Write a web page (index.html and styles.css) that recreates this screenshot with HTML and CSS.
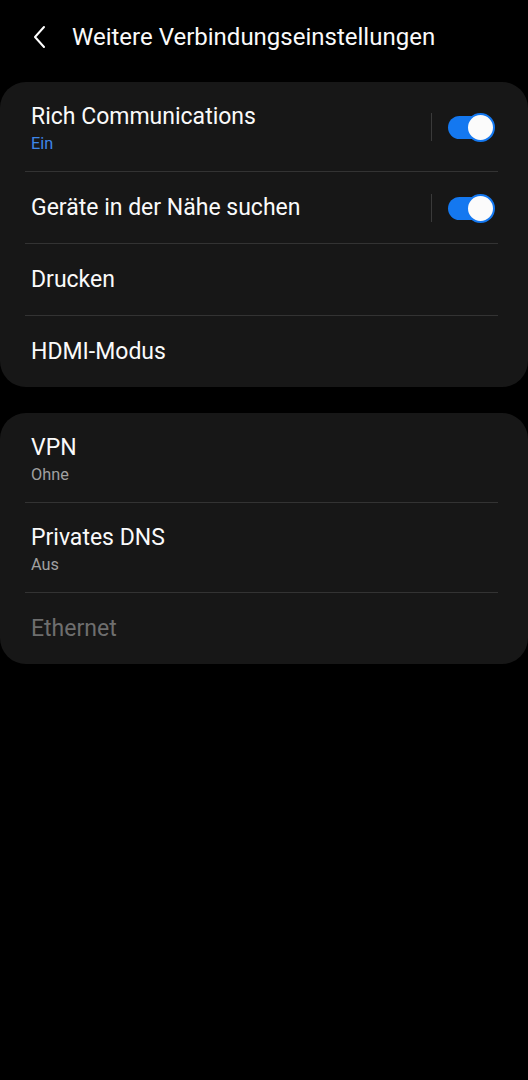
FILE: index.html
```html
<!DOCTYPE html>
<html lang="de">
<head>
    <meta charset="UTF-8">
    <title>Weitere Verbindungseinstellungen</title>
    <link rel="stylesheet" href="styles.css">
</head>
<body>
    <header class="topbar">
        <svg class="back" width="16" height="24" viewBox="0 0 16 24">
            <path d="M12 2 L3 12 L12 22" fill="none" stroke="#fff" stroke-width="2" stroke-linecap="round" stroke-linejoin="round"/>
        </svg>
        <h1>Weitere Verbindungseinstellungen</h1>
    </header>

    <section class="card">
        <div class="row double">
            <div class="text">
                <div class="title">Rich Communications</div>
                <div class="sub on">Ein</div>
            </div>
            <span class="sep"></span>
            <span class="switch"><span class="knob"></span></span>
        </div>
        <div class="row">
            <div class="text">
                <div class="title">Geräte in der Nähe suchen</div>
            </div>
            <span class="sep"></span>
            <span class="switch"><span class="knob"></span></span>
        </div>
        <div class="row">
            <div class="text"><div class="title">Drucken</div></div>
        </div>
        <div class="row last">
            <div class="text"><div class="title">HDMI-Modus</div></div>
        </div>
    </section>

    <section class="card">
        <div class="row double">
            <div class="text">
                <div class="title">VPN</div>
                <div class="sub">Ohne</div>
            </div>
        </div>
        <div class="row double">
            <div class="text">
                <div class="title">Privates DNS</div>
                <div class="sub">Aus</div>
            </div>
        </div>
        <div class="row last">
            <div class="text"><div class="title disabled">Ethernet</div></div>
        </div>
    </section>
</body>
</html>
```

FILE: styles.css
```css
body {
    margin: 0;
    background: #000;
    color: #fafafa;
    font-family: Roboto, "Noto Sans", sans-serif;
}
.topbar {
    height: 82px;
    display: flex;
    align-items: center;
    padding-left: 32px;
    box-sizing: border-box;
    padding-bottom: 8px;
}
.back {
    margin-right: 24px;
}
.topbar h1 {
    margin: 0;
    font-size: 24px;
    font-weight: 400;
}
.card {
    background: #171717;
    border-radius: 26px;
    margin-bottom: 26px;
}
.row {
    position: relative;
    height: 72px;
    display: flex;
    align-items: center;
    padding: 0 34px 0 31px;
}
.row.double {
    height: 90px;
}
.row.double .text {
    padding-top: 2px;
}
.row.last {
    height: 71px;
}
.row::after {
    content: "";
    position: absolute;
    left: 25px;
    right: 30px;
    bottom: 0;
    height: 1px;
    background: #333;
}
.row.last::after {
    display: none;
}
.text {
    flex: 1;
}
.title {
    font-size: 23px;
    line-height: 28px;
}
.title.disabled {
    color: #6e6e6e;
}
.sub {
    font-size: 16.3px;
    line-height: 20px;
    color: #a0a0a0;
    margin-top: 3px;
}
.sub.on {
    color: #3e86e8;
}
.sep {
    width: 1px;
    height: 28px;
    background: #3a3a3a;
    margin-right: 16px;
}
.switch {
    position: relative;
    width: 46px;
    height: 23px;
    border-radius: 12px;
    background: #1478f0;
}
.knob {
    position: absolute;
    right: -1px;
    top: -3px;
    width: 25px;
    height: 25px;
    border-radius: 50%;
    background: #fbfbfb;
    border: 2px solid #1478f0;
}
```
